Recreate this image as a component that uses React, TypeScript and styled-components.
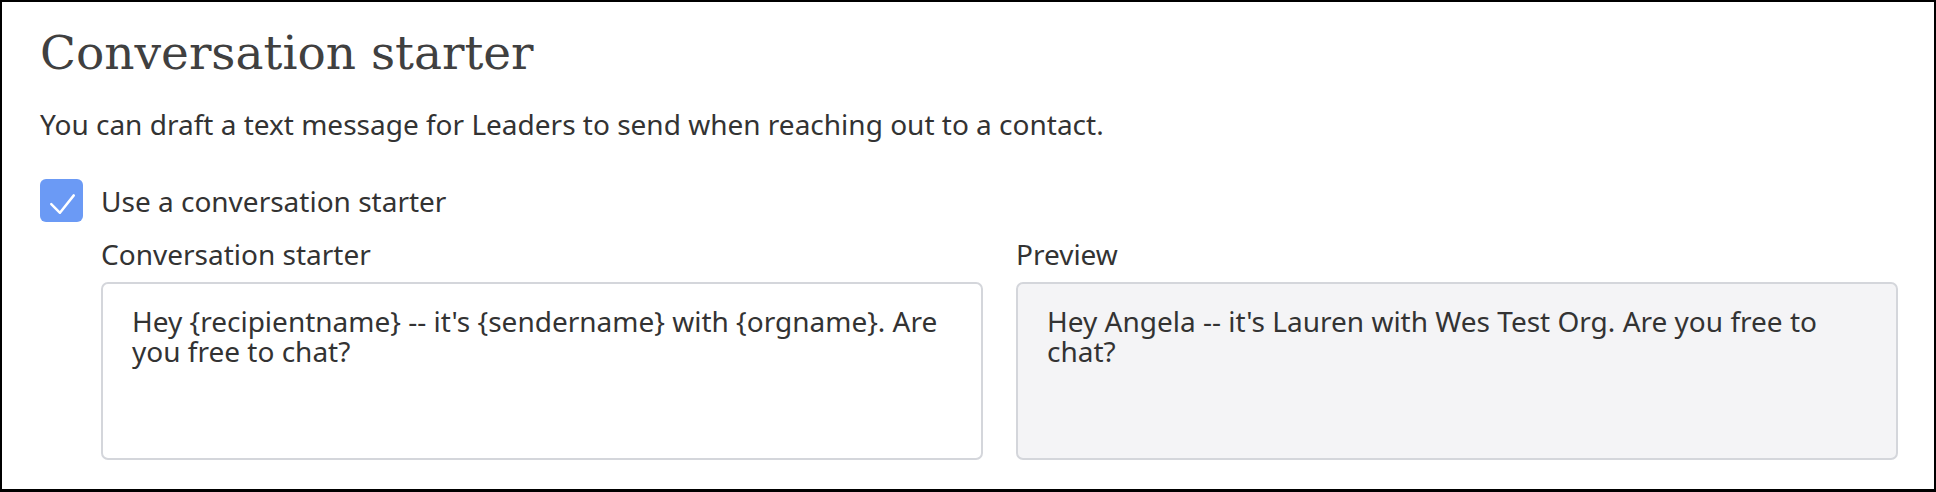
import React from "react";
import styled, { createGlobalStyle } from "styled-components";

const GlobalStyle = createGlobalStyle`
  html, body {
    margin: 0;
    padding: 0;
    background: #ffffff;
  }
  * {
    box-sizing: border-box;
  }
`;

const template = "Hey {recipientname} -- it's {sendername} with {orgname}. Are you free to chat?";
const preview = "Hey Angela -- it's Lauren with Wes Test Org. Are you free to chat?";

function App() {
  return (
    <>
      <GlobalStyle />
      <Frame>
        <Title>Conversation starter</Title>
        <Description>
          You can draft a text message for Leaders to send when reaching out to a contact.
        </Description>
        <CheckRow>
          <CheckBox aria-checked="true" role="checkbox">
            <svg width="43" height="43" viewBox="0 0 42 42" fill="none">
              <path
                d="M11 24.5 L19.5 33 L33 16"
                stroke="#ffffff"
                strokeWidth="2.4"
                strokeLinecap="round"
                strokeLinejoin="round"
              />
            </svg>
          </CheckBox>
          <CheckLabel>Use a conversation starter</CheckLabel>
        </CheckRow>
        <Fields>
          <Field>
            <FieldLabel>Conversation starter</FieldLabel>
            <MessageInput readOnly defaultValue={template} />
          </Field>
          <Field>
            <FieldLabel>Preview</FieldLabel>
            <PreviewBox>{preview}</PreviewBox>
          </Field>
        </Fields>
      </Frame>
    </>
  );
}

export default App;

const Frame = styled.div`
  width: 1936px;
  height: 492px;
  border: 2px solid #000000;
  border-bottom-width: 3px;
  padding: 0 36px 0 38px;
  background: #ffffff;
  color: #333333;
  font-family: "Noto Sans", "Open Sans", sans-serif;
  overflow: hidden;
`;

const Title = styled.h1`
  margin: 24px 0 0;
  font-family: "DejaVu Serif", "Liberation Serif", serif;
  font-weight: 400;
  font-size: 47px;
  line-height: 54px;
  color: #404040;
`;

const Description = styled.p`
  margin: 25px 0 0;
  font-size: 28px;
  line-height: 38px;
`;

const CheckRow = styled.div`
  display: flex;
  align-items: center;
  gap: 18px;
  margin-top: 36px;
`;

const CheckBox = styled.span`
  display: flex;
  width: 43px;
  height: 43px;
  border-radius: 6px;
  background: #6b9af5;
`;

const CheckLabel = styled.span`
  font-size: 28px;
  line-height: 38px;
`;

const Fields = styled.div`
  display: grid;
  grid-template-columns: 1fr 1fr;
  gap: 33px;
  margin: 13px 0 0 61px;
`;

const Field = styled.div`
  display: flex;
  flex-direction: column;
  gap: 9px;
`;

const FieldLabel = styled.label`
  font-size: 28px;
  line-height: 38px;
`;

const boxStyles = `
  height: 178px;
  padding: 22px 29px;
  border: 2px solid #d4d6db;
  border-radius: 7px;
  font-family: "Noto Sans", "Open Sans", sans-serif;
  font-size: 28px;
  line-height: 30px;
  color: #333333;
`;

const MessageInput = styled.textarea`
  ${boxStyles}
  width: 100%;
  display: block;
  margin: 0;
  background: #ffffff;
  resize: none;
  outline: none;
  overflow: hidden;
`;

const PreviewBox = styled.div`
  ${boxStyles}
  background: #f4f4f6;
`;
